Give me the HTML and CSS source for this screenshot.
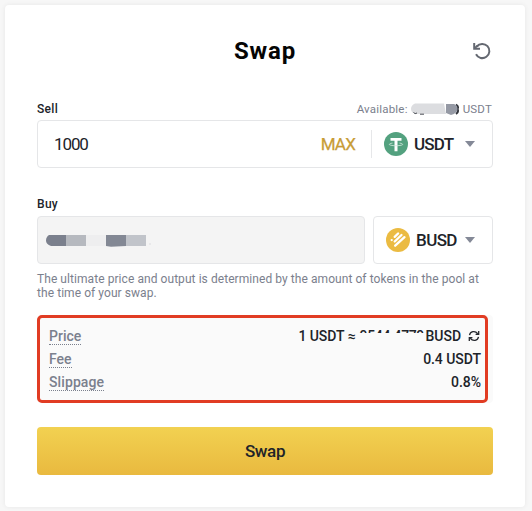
FILE: index.html
```html
<!DOCTYPE html>
<html lang="en">
<head>
<meta charset="utf-8">
<title>Swap</title>
<link rel="stylesheet" href="styles.css">
</head>
<body>
<main class="card">
  <header class="header">
    <h1 class="title">Swap</h1>
    <svg class="reset" width="20" height="20" viewBox="0 0 20 20" fill="none" stroke="#646871" stroke-width="2"><path d="M4.800 5.500A7.100 7.100 0 1 1 4 13.300"/><path d="M2.200 2v5.700H8"/><path d="M2.500 7.300 5.800 4.500"/></svg>
  </header>
  <div class="labels">
    <span class="label">Sell</span>
    <span class="available"><span>Available:</span>
      <svg width="49" height="13" viewBox="0 0 49 13"><path d="M4 .5H33L35 11H5Q0 10 0 6T4 .5Z" fill="#dcdde0"/><path d="M2.500 9.500q1.500 2 3.500 .5M9 11.200h4" stroke="#4a4d54" stroke-width="1" fill="none"/><path d="M45 1.500q3 2 1.500 4.500 1.500 3-1.500 5" stroke="#30333a" stroke-width="2" fill="none"/><path d="M35 1H43Q46.500 2 46.500 6T40 12L35 10Z" fill="#9599a4"/></svg>
      <span>USDT</span></span>
  </div>
  <section class="field">
    <span class="amount">1000</span>
    <span class="max">MAX</span>
    <div class="token">
      <svg width="24" height="24" viewBox="0 0 24 24"><circle cx="12" cy="12" r="12" fill="#53a17f"/><path d="M6.500 6h11v2.700h-4v10.600h-3V8.700h-4z" fill="#fff"/><path d="M8.500 11.100c-5 .7-4.200 2.600 3.500 2.600s8.500-1.900 3.500-2.600" fill="none" stroke="#d5eae0" stroke-width=".8"/></svg>
      <b class="name">USDT</b>
      <i class="caret"></i>
    </div>
  </section>
  <div class="buy-label"><span class="label">Buy</span></div>
  <section class="buy">
    <div class="output">
      <svg width="106" height="14" viewBox="0 0 106 14"><path d="M3 1H20V12H5Q0 10 0 6.500T3 1Z" fill="#7b808d"/><path d="M20 1h20v11H20z" fill="#b6b9bf"/><path d="M40 1h20v11H40z" fill="#eeeeef"/><path d="M60 1h20v11l-15 .7L60 12z" fill="#838894"/><path d="M80 1h20v11H80z" fill="#c1c4ca"/><path d="M103.500 9.500h1v1h-1z" fill="#c1c4ca"/></svg>
    </div>
    <div class="picker">
      <svg width="24" height="24" viewBox="0 0 24 24"><circle cx="12" cy="12" r="12" fill="#ebbb42"/><path d="M8.700 8.900 12.100 5.500M5.700 12.100h.01M8.700 13.500 15.500 7M9.200 17.700 18.500 9.200" stroke="#fff" stroke-width="2.300" stroke-linecap="round"/></svg>
      <b class="name busd">BUSD</b>
      <i class="caret"></i>
    </div>
  </section>
  <p class="hint">The ultimate price and output is determined by the amount of tokens in the pool at<br>the time of your swap.</p>
  <div class="summary-wrap">
  <section class="summary">
    <div class="row"><span class="term">Price</span><span class="value rate"><span>1 USDT ≈</span><span class="redacted">9544.4779</span><span>BUSD</span><svg width="12" height="12" viewBox="0 0 12 12" fill="none" stroke="#25282e" stroke-width="1.300"><path d="M1.500 5.100C2.200 1.300 7 .2 9.700 3.600M10.700 1.100V4.300H7.600M10.500 6.900C9.800 10.700 5 11.800 2.300 8.400M1.300 10.900V7.700H4.400"/></svg></span></div>
    <div class="row"><span class="term">Fee</span><span class="value">0.4 USDT</span></div>
    <div class="row"><span class="term slippage">Slippage</span><span class="value">0.8%</span></div>
  </section>
  </div>
  <button class="submit">Swap</button>
</main>
</body>
</html>
```
FILE: styles.css
```css
* { box-sizing: border-box; }
body { margin: 0; padding: 5px 7px 4px 5px; background: #f7f7f7; color: #202329; font-family: Roboto, "Liberation Sans", sans-serif; }
.card { width: 520px; height: 502px; padding: 0 32px; background: #fff; border-radius: 4px; box-shadow: 0 0 5px rgba(0,0,0,.07); }
.header { position: relative; height: 92px; display: flex; align-items: center; justify-content: center; }
.title { margin: 0; font-size: 24px; line-height: 30px; font-weight: 700; letter-spacing: .8px; color: #050505; }
.reset { position: absolute; right: 1px; top: 36px; }
.labels { height: 23px; display: flex; justify-content: space-between; align-items: center; padding-top: 1px; }
.label { font-size: 12px; font-weight: 500; line-height: 16px; letter-spacing: .3px; }
.available { display: flex; align-items: center; gap: 3px; font-size: 11.5px; letter-spacing: .2px; color: #7b808d; padding-right: 1px; }
.field { display: flex; align-items: center; height: 48px; border: 1px solid #e5e6e8; border-radius: 4px; padding: 0 17px 0 16px; font-size: 17px; }
.amount { letter-spacing: -1.1px; }
.max { margin-left: auto; color: #c89c36; letter-spacing: -.8px; -webkit-text-stroke: .25px #c89c36; }
.token { width: 104px; height: 28px; margin-left: 16px; padding-left: 12px; border-left: 1px solid #e6e7e9; display: flex; align-items: center; }
.name { font-size: 17px; font-weight: 500; margin-left: 6px; letter-spacing: -.8px; }
.busd { letter-spacing: -.6px; }
.caret { margin-left: auto; border-left: 5px solid transparent; border-right: 5px solid transparent; border-top: 6px solid #848997; }
.buy-label { height: 48px; padding-top: 28px; line-height: 16px; }
.buy-label .label { display: block; }
.buy { display: flex; gap: 8px; }
.output, .picker { height: 48px; border: 1px solid #e5e6e8; border-radius: 4px; display: flex; align-items: center; }
.output { width: 328px; padding: 2px 0 0 8px; background: #f4f4f4; }
.picker { width: 120px; padding: 0 17px 0 12px; }
.hint { margin: 8px 0 0; font-size: 12px; line-height: 14px; letter-spacing: .065px; color: #7b808d; white-space: nowrap; }
.summary-wrap { margin-top: 15px; height: 88px; background: #fafafa; border-radius: 4px; }
.summary { width: 451px; height: 88px; background: #fafafa; border: 3px solid #e13c23; border-radius: 5px; padding: 7px 4px 0 9px; }
.row { display: flex; justify-content: space-between; align-items: center; height: 23px; }
.term { color: #7b808d; font-size: 14px; font-weight: 500; line-height: 16px; border-bottom: 1px dotted #7b808d; }
.slippage { letter-spacing: .1px; }
.value { font-size: 14px; font-weight: 500; line-height: 16px; letter-spacing: -.05px; padding-bottom: 1px; }
.rate { display: flex; align-items: center; padding-right: 1px; }
.redacted { width: 70px; padding-left: 4px; letter-spacing: -.35px; clip-path: inset(0 0 11px 0); }
.rate svg { margin-left: 7px; }
.submit { display: block; width: 456px; height: 48px; margin-top: 24px; padding: 0; border: 0; border-radius: 4px; background: linear-gradient(#f2d151, #e9b93f); color: #202329; font: 500 17px Roboto, sans-serif; letter-spacing: -.35px; }
```
